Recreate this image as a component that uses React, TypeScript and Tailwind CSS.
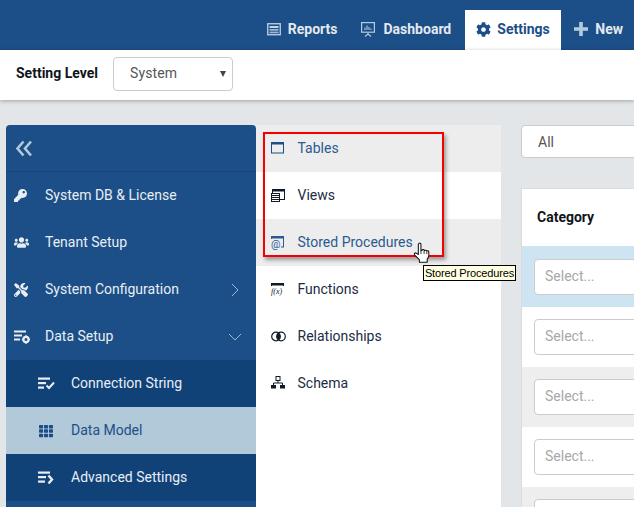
import { FaCog, FaKey, FaUsers, FaTools, FaTh } from "react-icons/fa";

function ReportsIcon() {
  return (
    <svg width="14" height="14" viewBox="0 0 14 14" className="text-[#c3d3e4]">
      <rect x="0.75" y="1.75" width="12.5" height="11" fill="none" stroke="currentColor" strokeWidth="1.3" />
      <rect x="2.5" y="4" width="9" height="2" fill="currentColor" />
      <rect x="2.5" y="7" width="9" height="1.7" fill="currentColor" opacity="0.8" />
      <rect x="2.5" y="9.6" width="9" height="1.7" fill="currentColor" opacity="0.8" />
    </svg>
  );
}

function DashboardIcon() {
  return (
    <svg width="14" height="15" viewBox="0 0 14 15" className="text-[#b4cade]">
      <rect x="0.6" y="0.6" width="12.8" height="9.6" fill="none" stroke="currentColor" strokeWidth="1.2" />
      <path d="M4 8V5.5M6 8V3.5M8 8V5M10 8V6.5" stroke="currentColor" strokeWidth="1.1" />
      <path d="M7 10.5V12M7 12L4 14.5M7 12L10 14.5" stroke="currentColor" strokeWidth="1.1" fill="none" />
    </svg>
  );
}

function PlusIcon() {
  return (
    <svg width="14" height="14" viewBox="0 0 14 14" className="text-[#b4cade]">
      <path d="M5.2 0H8.8V5.2H14V8.8H8.8V14H5.2V8.8H0V5.2H5.2Z" fill="currentColor" />
    </svg>
  );
}

function DoubleLeftIcon() {
  return (
    <svg width="18" height="17" viewBox="0 0 18 17" className="text-[#b2c9da]">
      <path d="M8.5 1.5L2.5 8.5L8.5 15.5M16 1.5L10 8.5L16 15.5" fill="none" stroke="currentColor" strokeWidth="2.6" />
    </svg>
  );
}

function DataSetupIcon() {
  return (
    <svg width="16" height="14" viewBox="0 0 16 14" fill="#e8eef4">
      <rect x="0" y="0.5" width="12" height="2" />
      <rect x="0" y="4.5" width="8" height="2" />
      <rect x="0" y="8.5" width="6" height="2" />
      <circle cx="12" cy="9.5" r="2.6" fill="none" stroke="#e8eef4" strokeWidth="2.2" />
      <path d="M12 5.2v1.6M12 12.2v1.6M7.8 9.5h1.6M14.6 9.5h1.6" stroke="#e8eef4" strokeWidth="1.6" />
    </svg>
  );
}

function ListCheckIcon() {
  return (
    <svg width="17" height="13" viewBox="0 0 17 13" fill="#e8eef4">
      <rect x="0" y="0.5" width="12" height="2.2" />
      <rect x="0" y="5" width="8" height="2.2" />
      <rect x="0" y="9.5" width="6" height="2.2" />
      <path d="M8.5 8.5L11 11L16 5.5" fill="none" stroke="#e8eef4" strokeWidth="2" />
    </svg>
  );
}

function ListArrowIcon() {
  return (
    <svg width="16" height="14" viewBox="0 0 16 14" fill="#e8eef4">
      <rect x="0" y="0.5" width="12" height="2.2" />
      <rect x="0" y="5" width="8" height="2.2" />
      <rect x="0" y="9.5" width="7" height="2.2" />
      <path d="M10.5 4.5L14 8.5L10.5 12.5" fill="none" stroke="#e8eef4" strokeWidth="2.4" />
    </svg>
  );
}

function WindowIcon({ children, color }: { children?: React.ReactNode; color: string }) {
  return (
    <svg width="13" height="14" viewBox="0 0 13 14" style={{ color }} className="overflow-visible">
      <rect x="0.5" y="0.5" width="12" height="10.5" fill="none" stroke="currentColor" />
      <rect x="0" y="0" width="13" height="2.5" fill="currentColor" />
      {children}
    </svg>
  );
}

function TablesIcon() {
  return <WindowIcon color="#1c4e87" />;
}

function ViewsIcon() {
  return (
    <svg width="14" height="14" viewBox="0 0 14 14" className="text-[#10182a]">
      <rect x="1.5" y="0.5" width="12" height="10" fill="none" stroke="currentColor" />
      <rect x="1" y="0" width="13" height="2.5" fill="currentColor" />
      <rect x="0" y="4" width="9" height="9" fill="#fff" />
      <rect x="0.5" y="4.5" width="8" height="8" fill="none" stroke="currentColor" />
      <path d="M1 6.5H8M1 8.5H8M1 10.5H8" stroke="currentColor" strokeWidth="1.2" />
    </svg>
  );
}

function StoredIcon() {
  return (
    <WindowIcon color="#2c5a91">
      <rect x="0" y="3" width="10" height="11" fill="#ededed" />
      <text x="0" y="12" fontSize="10.5" fontFamily="Roboto, sans-serif" fill="currentColor">@</text>
    </WindowIcon>
  );
}

function FunctionsIcon() {
  return (
    <WindowIcon color="#10182a">
      <rect x="0" y="3" width="13" height="9" fill="#fff" />
      <text x="0" y="10.5" fontSize="8" fontStyle="italic" fontFamily="'Liberation Serif', serif" fill="currentColor">f(x)</text>
    </WindowIcon>
  );
}

function RelationshipsIcon() {
  return (
    <svg width="15" height="11" viewBox="0 0 15 11" className="text-[#10182a]">
      <circle cx="5" cy="5.5" r="4.3" fill="none" stroke="currentColor" strokeWidth="1.2" />
      <circle cx="10" cy="5.5" r="4.3" fill="none" stroke="currentColor" strokeWidth="1.2" />
      <path d="M7.5 2a4.3 4.3 0 0 1 0 7a4.3 4.3 0 0 1 0-7z" fill="currentColor" />
    </svg>
  );
}

function SchemaIcon() {
  return (
    <svg width="14" height="13" viewBox="0 0 14 13" className="mb-[2px] text-[#10182a]">
      <rect x="5" y="0.5" width="4" height="4" fill="none" stroke="currentColor" />
      <path d="M7 4.5V7M2.5 9V7H11.5V9" fill="none" stroke="currentColor" />
      <rect x="0" y="9" width="5" height="3.5" fill="currentColor" />
      <rect x="9" y="9" width="5" height="3.5" fill="currentColor" />
    </svg>
  );
}

function HandCursor() {
  return (
    <svg width="18" height="23" viewBox="0 0 16 22" className="absolute left-[413px] top-[242px]">
      <path
        d="M5 1.5c.8-.8 2-.5 2 .8V8l1 0c.3-1 2-1 2.2 0l.3.3c.5-.8 2-.6 2 .4.6-.5 1.8-.3 2 .7v3.5c0 1.5-.8 2.6-1.5 3.5v3H5.5v-2.5L1 12.5c-.9-1.2.3-2.6 1.6-1.8L4.5 12V2z"
        fill="#fff"
        stroke="#111"
        strokeWidth="1"
        strokeLinejoin="round"
      />
      <path d="M7 8v3.5M10 8.4v3M12.6 9v2.5" stroke="#111" strokeWidth="0.8" />
    </svg>
  );
}

function Chevron({ down }: { down?: boolean }) {
  return down ? (
    <svg width="14" height="8" viewBox="0 0 14 8" className="text-[#9db8d2]">
      <path d="M1 1L7 7L13 1" fill="none" stroke="currentColor" strokeWidth="1" />
    </svg>
  ) : (
    <svg width="8" height="14" viewBox="0 0 8 14" className="text-[#9db8d2]">
      <path d="M1 1L7 7L1 13" fill="none" stroke="currentColor" strokeWidth="1" />
    </svg>
  );
}

function SideItem({ icon, label, chevron }: { icon: React.ReactNode; label: string; chevron?: React.ReactNode }) {
  return (
    <div className="flex h-[47px] items-center text-sm text-[#e8eef4]">
      <div className="flex w-[39px] justify-start pl-[8px]">{icon}</div>
      <span className="flex-1 pb-[2px] font-[450]">{label}</span>
      {chevron && <div className="flex w-[42px] justify-center">{chevron}</div>}
    </div>
  );
}

function SubItem({ icon, label, active }: { icon: React.ReactNode; label: string; active?: boolean }) {
  return (
    <div className={`flex h-[47px] items-center text-sm ${active ? "bg-[#b2c9da] text-[#1c4e87]" : "bg-[#104278] text-[#e8eef4]"}`}>
      <div className="flex w-[65px] items-center pl-[32px]">{icon}</div>
      <span className="pb-[2px] font-[450]">{label}</span>
    </div>
  );
}

function ModelRow({ icon, label, gray, blue }: { icon: React.ReactNode; label: string; gray?: boolean; blue?: boolean }) {
  return (
    <div className={`flex h-[47px] items-center text-sm ${gray ? "bg-[#ededed]" : "bg-white"} ${blue ? "text-[#2c5a91]" : "text-[#1c2c44]"}`}>
      <div className="flex w-[41.5px] justify-start pl-[15px]">{icon}</div>
      <span className="pb-[2px]">{label}</span>
    </div>
  );
}

function SelectRow({ bg, first }: { bg: string; first?: boolean }) {
  return (
    <div className={`px-[12px] ${first ? "h-[61px] pt-[13px]" : "h-[60px] pt-[12px]"} ${bg}`}>
      <div className="flex h-[36px] w-[300px] items-center rounded border border-[#cccccc] bg-white px-[10px] pb-[2px] text-sm text-[#a8a8a8]">
        Select...
      </div>
    </div>
  );
}

export default function App() {
  return (
    <div className="relative flex h-[507px] w-[634px] flex-col overflow-hidden bg-[#e3e6e8] font-['Roboto',sans-serif]">
      <header className="flex h-[50px] shrink-0 items-end justify-end bg-[#1c4e87] text-sm font-bold text-[#e3e9ef]">
        <div className="flex h-10 items-center gap-[7px] pb-[2px]">
          <ReportsIcon />
          <span>Reports</span>
        </div>
        <div className="ml-[24px] flex h-10 items-center gap-[8px] pb-[2px]">
          <DashboardIcon />
          <span>Dashboard</span>
        </div>
        <div className="ml-[14px] flex h-10 w-[96px] items-center gap-[6px] bg-white pb-[2px] pl-[11px] text-[#1c4e87]">
          <FaCog className="h-[15px] w-[15px]" />
          <span>Settings</span>
        </div>
        <div className="ml-[13px] mr-[11px] flex h-10 items-center gap-[7px] pb-[2px]">
          <PlusIcon />
          <span>New</span>
        </div>
      </header>

      <div className="z-10 flex h-[50px] shrink-0 items-center gap-[15px] bg-white pb-[4px] pl-4 shadow-[0_1px_4px_rgba(0,0,0,0.3)]">
        <span className="text-sm font-bold text-[#10141c]">Setting Level</span>
        <div className="mt-[2px] flex h-[34px] w-[120px] items-center justify-between rounded border border-[#cccccc] bg-white pb-[2px] pl-4 pr-[6px] text-sm tracking-[0.1px] text-[#555555]">
          System
          <span className="mt-[2px] h-0 w-0 border-x-[3.5px] border-t-[6px] border-x-transparent border-t-[#444]" />
        </div>
      </div>

      <main className="flex flex-1 pl-[6px] pt-[25px]">
        <aside className="w-[250px] shrink-0 rounded-t bg-[#1c4e87]">
          <div className="flex h-[47px] items-center border-b border-[#174376] pl-[9px]">
            <DoubleLeftIcon />
          </div>
          <SideItem icon={<FaKey className="h-[13px] w-[13px]" />} label="System DB & License" />
          <SideItem icon={<FaUsers className="h-[15px] w-[15px]" />} label="Tenant Setup" />
          <SideItem icon={<FaTools className="h-[14px] w-[14px]" />} label="System Configuration" chevron={<Chevron />} />
          <SideItem icon={<DataSetupIcon />} label="Data Setup" chevron={<Chevron down />} />
          <SubItem icon={<ListCheckIcon />} label="Connection String" />
          <SubItem active icon={<FaTh className="ml-px h-[14px] w-[14px] text-[#1c4e87]" />} label="Data Model" />
          <SubItem icon={<ListArrowIcon />} label="Advanced Settings" />
        </aside>

        <section className="w-[245px] shrink-0 bg-white">
          <ModelRow gray blue icon={<TablesIcon />} label="Tables" />
          <ModelRow icon={<ViewsIcon />} label="Views" />
          <ModelRow gray blue icon={<StoredIcon />} label="Stored Procedures" />
          <ModelRow icon={<FunctionsIcon />} label="Functions" />
          <ModelRow icon={<RelationshipsIcon />} label="Relationships" />
          <ModelRow icon={<SchemaIcon />} label="Schema" />
        </section>

        <section className="ml-[20px] w-[400px] shrink-0">
          <div className="flex h-[33px] items-center rounded border border-[#cccccc] bg-white px-4 text-sm text-[#555555]">
            All
          </div>
          <div className="mt-[30px] border border-[#d8dcdf] bg-white">
            <div className="flex h-[57px] items-center pb-[2px] pl-[15px] text-sm font-bold text-[#10141c]">Category</div>
            <SelectRow first bg="bg-[#cfe4f2]" />
            <SelectRow bg="bg-white" />
            <SelectRow bg="bg-[#eeeeee]" />
            <SelectRow bg="bg-white" />
            <SelectRow bg="bg-[#eeeeee]" />
          </div>
        </section>
      </main>

      <div className="absolute left-[263px] top-[132px] h-[125px] w-[181px] border-[2px] border-[#f40000] shadow-[2px_3px_4px_rgba(0,0,0,0.35)]" />
      <HandCursor />
      <div className="absolute left-[423px] top-[265px] flex h-[16px] w-[93px] items-center justify-center whitespace-nowrap border border-black bg-[#ffffe1] font-['Liberation_Sans',sans-serif] text-[11px] leading-none tracking-[-0.15px] text-black">
        Stored Procedures
      </div>
    </div>
  );
}
